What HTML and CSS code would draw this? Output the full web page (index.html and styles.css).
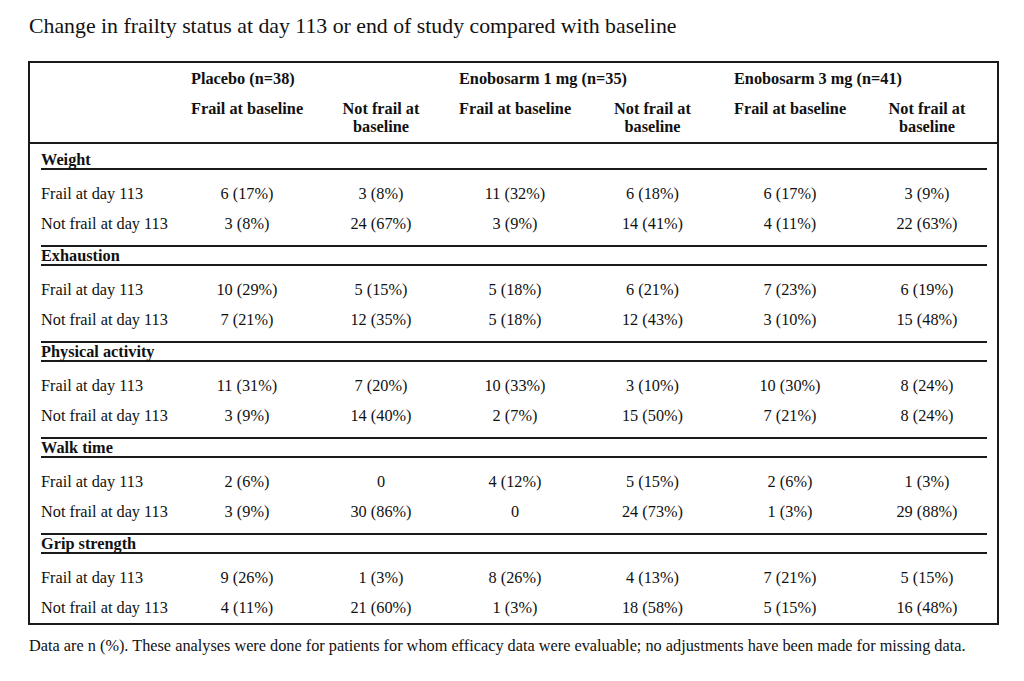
FILE: index.html
```html
<!DOCTYPE html>
<html lang="en">
<head>
<meta charset="utf-8">
<title>Change in frailty status</title>
<link rel="stylesheet" href="styles.css">
</head>
<body>
<main class="page">
  <h1 class="title">Change in frailty status at day 113 or end of study compared with baseline</h1>
  <div class="table">
    <div class="thead grid">
      <div class="group c2">Placebo (n=38)</div>
      <div class="group c4">Enobosarm 1 mg (n=35)</div>
      <div class="group c6">Enobosarm 3 mg (n=41)</div>
      <div class="sub c2">Frail at baseline</div>
      <div class="sub c3">Not frail at<br>baseline</div>
      <div class="sub c4">Frail at baseline</div>
      <div class="sub c5">Not frail at<br>baseline</div>
      <div class="sub c6">Frail at baseline</div>
      <div class="sub c7">Not frail at<br>baseline</div>
    </div>
    <div class="tbody">
      <section class="sec first">
        <div class="sec-title">Weight</div>
        <div class="rows">
          <div class="row grid"><div class="lbl">Frail at day 113</div><div class="v">6 (17%)</div><div class="v">3 (8%)</div><div class="v">11 (32%)</div><div class="v">6 (18%)</div><div class="v">6 (17%)</div><div class="v">3 (9%)</div></div>
          <div class="row grid"><div class="lbl">Not frail at day 113</div><div class="v">3 (8%)</div><div class="v">24 (67%)</div><div class="v">3 (9%)</div><div class="v">14 (41%)</div><div class="v">4 (11%)</div><div class="v">22 (63%)</div></div>
        </div>
      </section>
      <section class="sec">
        <div class="sec-title">Exhaustion</div>
        <div class="rows">
          <div class="row grid"><div class="lbl">Frail at day 113</div><div class="v">10 (29%)</div><div class="v">5 (15%)</div><div class="v">5 (18%)</div><div class="v">6 (21%)</div><div class="v">7 (23%)</div><div class="v">6 (19%)</div></div>
          <div class="row grid"><div class="lbl">Not frail at day 113</div><div class="v">7 (21%)</div><div class="v">12 (35%)</div><div class="v">5 (18%)</div><div class="v">12 (43%)</div><div class="v">3 (10%)</div><div class="v">15 (48%)</div></div>
        </div>
      </section>
      <section class="sec">
        <div class="sec-title">Physical activity</div>
        <div class="rows">
          <div class="row grid"><div class="lbl">Frail at day 113</div><div class="v">11 (31%)</div><div class="v">7 (20%)</div><div class="v">10 (33%)</div><div class="v">3 (10%)</div><div class="v">10 (30%)</div><div class="v">8 (24%)</div></div>
          <div class="row grid"><div class="lbl">Not frail at day 113</div><div class="v">3 (9%)</div><div class="v">14 (40%)</div><div class="v">2 (7%)</div><div class="v">15 (50%)</div><div class="v">7 (21%)</div><div class="v">8 (24%)</div></div>
        </div>
      </section>
      <section class="sec">
        <div class="sec-title">Walk time</div>
        <div class="rows">
          <div class="row grid"><div class="lbl">Frail at day 113</div><div class="v">2 (6%)</div><div class="v">0</div><div class="v">4 (12%)</div><div class="v">5 (15%)</div><div class="v">2 (6%)</div><div class="v">1 (3%)</div></div>
          <div class="row grid"><div class="lbl">Not frail at day 113</div><div class="v">3 (9%)</div><div class="v">30 (86%)</div><div class="v">0</div><div class="v">24 (73%)</div><div class="v">1 (3%)</div><div class="v">29 (88%)</div></div>
        </div>
      </section>
      <section class="sec last">
        <div class="sec-title">Grip strength</div>
        <div class="rows">
          <div class="row grid"><div class="lbl">Frail at day 113</div><div class="v">9 (26%)</div><div class="v">1 (3%)</div><div class="v">8 (26%)</div><div class="v">4 (13%)</div><div class="v">7 (21%)</div><div class="v">5 (15%)</div></div>
          <div class="row grid"><div class="lbl">Not frail at day 113</div><div class="v">4 (11%)</div><div class="v">21 (60%)</div><div class="v">1 (3%)</div><div class="v">18 (58%)</div><div class="v">5 (15%)</div><div class="v">16 (48%)</div></div>
        </div>
      </section>
    </div>
  </div>
  <p class="note">Data are n (%). These analyses were done for patients for whom efficacy data were evaluable; no adjustments have been made for missing data.</p>
</main>
</body>
</html>
```
FILE: styles.css
```css
html, body {
  margin: 0;
  padding: 0;
  background: #ffffff;
}

body {
  font-family: "Liberation Serif", "Times New Roman", serif;
  color: #111111;
}

.page {
  padding: 13px 25px 0 28px;
}

.title {
  margin: 0 0 22px 1px;
  font-size: 21.8px;
  line-height: 26px;
  font-weight: normal;
}

.table {
  border: 2px solid #1a1a1a;
  font-size: 16.3px;
  overflow: hidden;
}

.grid {
  display: grid;
  grid-template-columns: 150px 112px 156px 112px 163px 112px 162px;
}

.thead {
  padding: 7px 10px 6px 11px;
  border-bottom: 2px solid #1a1a1a;
  row-gap: 12px;
  font-weight: bold;
  line-height: 18px;
}

.group {
  grid-row: 1;
  white-space: nowrap;
}

.group.c2 { grid-column: 2 / span 2; }
.group.c4 { grid-column: 4 / span 2; }
.group.c6 { grid-column: 6 / span 2; }

.sub {
  grid-row: 2;
  text-align: center;
  white-space: nowrap;
}

.sub.c2 { grid-column: 2; }
.sub.c3 { grid-column: 3; }
.sub.c4 { grid-column: 4; }
.sub.c5 { grid-column: 5; }
.sub.c6 { grid-column: 6; }
.sub.c7 { grid-column: 7; }

.tbody {
  padding: 7px 10px 0 11px;
}

.sec {
  border-top: 2px solid #1a1a1a;
  padding-bottom: 6px;
}

.sec.first {
  border-top: 0;
}

.sec.last {
  padding-bottom: 0;
}

.sec-title {
  font-weight: bold;
  line-height: 16px;
  padding-top: 1px;
  border-bottom: 2px solid #1a1a1a;
}

.rows {
  padding-top: 9px;
}

.row {
  line-height: 30px;
}

.lbl {
  white-space: nowrap;
}

.v {
  text-align: center;
  white-space: nowrap;
}

.note {
  margin: 11px 0 0 1px;
  font-size: 16.3px;
  line-height: 20px;
}
```
